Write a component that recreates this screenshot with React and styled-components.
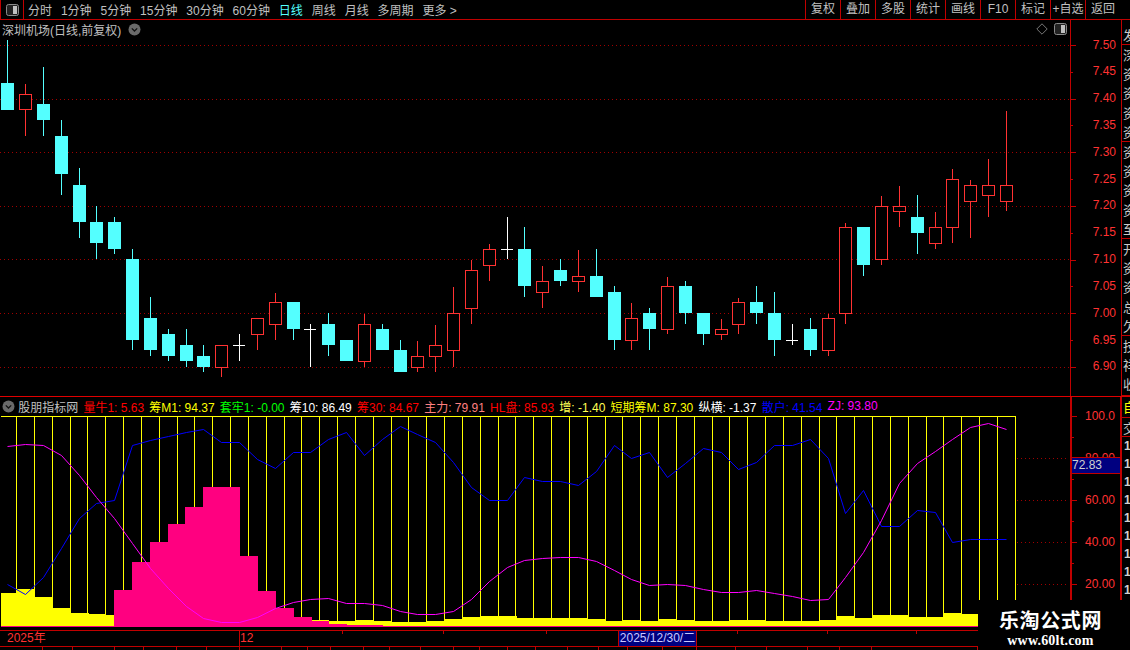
import React from 'react';
import styled, { createGlobalStyle } from 'styled-components';

const GlobalStyle = createGlobalStyle`
  html, body { margin: 0; padding: 0; background: #000; }
  * { box-sizing: border-box; }
`;

const RED_LINE = '#c00000';
const UP = '#ff3232';
const DOWN = '#54ffff';

// [x, 上影, 实体上, 实体下, 下影, 类型]
const candles = [
  [7, 40, 83, 110, 110, 'c'], [25, 84, 94, 110, 136, 'r'], [43, 67, 104, 120, 136, 'c'], [61, 120, 136, 174, 195, 'c'],
  [79, 168, 185, 222, 238, 'c'], [96, 206, 222, 243, 259, 'c'], [114, 217, 222, 249, 254, 'c'], [132, 249, 259, 340, 350, 'c'],
  [150, 297, 318, 350, 356, 'c'], [168, 329, 334, 356, 361, 'c'], [186, 329, 345, 361, 367, 'c'], [203, 345, 356, 367, 372, 'c'],
  [221, 345, 345, 368, 377, 'r'], [239, 334, 345, 345, 361, 'w'], [257, 318, 318, 335, 350, 'r'], [275, 293, 302, 325, 340, 'r'],
  [293, 302, 302, 329, 340, 'c'], [310, 324, 329, 329, 367, 'w'], [328, 313, 324, 345, 356, 'c'], [346, 340, 340, 361, 361, 'c'],
  [364, 314, 324, 362, 367, 'r'], [382, 324, 329, 350, 350, 'c'], [400, 340, 350, 372, 372, 'c'], [417, 341, 356, 368, 372, 'r'],
  [435, 325, 345, 357, 372, 'r'], [453, 287, 313, 351, 367, 'r'], [471, 260, 270, 309, 324, 'r'], [489, 244, 249, 266, 281, 'r'],
  [507, 217, 249, 249, 259, 'w'], [524, 227, 249, 286, 297, 'c'], [542, 266, 281, 293, 308, 'r'], [560, 259, 270, 281, 286, 'c'],
  [578, 250, 276, 282, 292, 'r'], [596, 249, 276, 297, 297, 'c'], [614, 286, 292, 340, 350, 'c'], [631, 303, 318, 341, 350, 'r'],
  [649, 308, 313, 329, 350, 'c'], [667, 277, 286, 330, 334, 'r'], [685, 281, 286, 313, 324, 'c'], [703, 313, 313, 334, 345, 'c'],
  [721, 319, 329, 335, 340, 'r'], [738, 298, 302, 325, 334, 'r'], [756, 286, 302, 313, 324, 'c'], [774, 292, 313, 340, 356, 'c'],
  [792, 324, 340, 340, 345, 'w'], [810, 318, 329, 350, 356, 'c'], [828, 314, 318, 351, 356, 'r'], [845, 223, 227, 314, 324, 'r'],
  [863, 227, 227, 265, 276, 'c'], [881, 196, 206, 260, 265, 'r'], [899, 186, 206, 212, 227, 'r'], [917, 195, 217, 233, 254, 'c'],
  [935, 212, 227, 244, 249, 'r'], [952, 169, 179, 228, 243, 'r'], [970, 180, 185, 202, 238, 'r'], [988, 159, 185, 196, 217, 'r'],
  [1006, 111, 185, 202, 211, 'r'],
];

const gridYs = [45, 99, 152, 206, 259, 313, 367];
const priceLabels = ['7.50', '7.45', '7.40', '7.35', '7.30', '7.25', '7.20', '7.15', '7.10', '7.05', '7.00', '6.95', '6.90'];
const indexLabels = ['100.0', '', '80.00', '', '60.00', '', '40.00', '', '20.00'];

const xs = candles.map((c) => c[0]);
const verticals = [...xs.slice(1).map((x) => x - 9), 1015];

const yellowBars = [
  [1, 593], [16, 589], [35, 597], [53, 608], [71, 613], [89, 614], [106, 615], [123, 626], [312, 620], [329, 621], [347, 621],
  [355, 620], [373, 621], [391, 622], [409, 622], [426, 621], [444, 619], [462, 617], [480, 616], [498, 616], [517, 618],
  [535, 618], [553, 618], [569, 618], [587, 619], [605, 621], [623, 620], [641, 621], [659, 619], [677, 620], [695, 621],
  [713, 621], [730, 620], [748, 620], [766, 621], [784, 621], [802, 621], [820, 620], [837, 616], [855, 618], [873, 615],
  [891, 615], [909, 617], [927, 617], [944, 613], [962, 614], [978, 626],
];
const pinkBars = [
  [114, 590], [132, 562], [150, 542], [168, 524], [185, 507], [203, 487], [240, 556], [258, 591], [276, 608], [294, 617],
  [312, 621], [329, 624], [347, 625], [383, 626],
];

const blueLine = [584, 594, 577, 548, 518, 503, 500, 445, 440, 436, 432, 429, 442, 442, 459, 468, 452, 452, 439, 432, 455, 439, 426, 434, 442, 462, 487, 500, 500, 477, 481, 481, 485, 471, 445, 458, 452, 477, 463, 448, 452, 469, 462, 445, 445, 439, 458, 513, 490, 526, 526, 510, 512, 542, 539, 539, 539];
const zjLine = [446, 444, 445, 455, 475, 497, 518, 543, 568, 588, 606, 618, 622, 622, 617, 608, 602, 599, 598, 603, 603, 605, 611, 614, 614, 611, 599, 581, 567, 560, 558, 557, 557, 561, 570, 579, 585, 584, 585, 589, 592, 592, 590, 593, 596, 600, 599, 577, 552, 520, 483, 463, 451, 439, 427, 423, 429];

const toPoints = (ys) => ys.map((y, i) => `${xs[i] + 0.5},${y + 0.5}`).join(' ');

const legend = [
  ['量牛1: 5.63', '#ff0000'], ['筹M1: 94.37', '#ffff00'], ['套牢1: -0.00', '#00ff00'], ['筹10: 86.49', '#ffffff'],
  ['筹30: 84.67', '#ff0000'], ['主力: 79.91', '#ff8080'], ['HL盘: 85.93', '#ff0000'], ['增: -1.40', '#ffff54'],
  ['短期筹M: 87.30', '#ffff00'], ['纵横: -1.37', '#ffffff'], ['散户: 41.54', '#0000ff'], ['ZJ: 93.80', '#ff00ff'],
];

const leftTabs = ['分时', '1分钟', '5分钟', '15分钟', '30分钟', '60分钟', '日线', '周线', '月线', '多周期', '更多 >'];
const rightButtons = ['复权', '叠加', '多股', '统计', '画线', 'F10', '标记', '+自选', '返回'];

const upperSide = [
  { h: 20, text: '发' },
  { h: 97, text: '深资资资资' },
  { h: 97, text: '资资资资至' },
  { h: 97, text: '开资资总欠' },
  { h: 60, text: '技祥收' },
];

const timeSlots = [
  [239, '2025年', false], [103, '12', true], [101, '', false], [103, '', false], [191, '', false], [90, '', false], [89, '', false], [62, '', false],
];
const tabWidths = [43, 30, 42, 29, 33, 30, 33, 42, 26, 23, 33, 26, 31, 33, 26, 28, 28, 32, 31, 29, 35, 34, 39, 31, 41, 32, 32, 106];

const Page = styled.div`
  position: relative;
  width: 1130px;
  height: 650px;
  overflow: hidden;
  background: #000;
  font-family: "Liberation Sans", "Noto Sans CJK SC", sans-serif;
  font-size: 12px;
  color: #c0c0c0;
`;

const Toolbar = styled.div`
  display: flex;
  align-items: stretch;
  justify-content: space-between;
  height: 20px;
  border-bottom: 1px solid ${RED_LINE};
`;

const TabGroup = styled.div`
  display: flex;
  align-items: center;
`;

const LayoutButton = styled.div`
  display: flex;
  align-items: center;
  justify-content: center;
  width: 24px;
  height: 19px;
  margin-right: 4px;
  border-left: 1px solid ${RED_LINE};
  border-right: 1px solid ${RED_LINE};
`;

const Tab = styled.span`
  margin-right: 8.9px;
  white-space: nowrap;
  color: ${(p) => (p.$active ? DOWN : '#c0c0c0')};
`;

const ButtonGroup = styled.div`
  display: flex;
  width: 325px;
`;

const ToolButton = styled.div`
  flex: 0 0 ${(p) => (p.$last ? '45px' : '35px')};
  padding-right: ${(p) => (p.$last ? '10px' : '0')};
  border-left: 1px solid ${RED_LINE};
  text-align: center;
  line-height: 19px;
  white-space: nowrap;
`;

const Pane = styled.div`
  display: flex;
  height: ${(p) => p.$h}px;
  border-bottom: ${(p) => (p.$divider ? '1px solid #e00000' : 'none')};
`;

const PlotColumn = styled.div`
  display: flex;
  flex-direction: column;
  width: 1070px;
`;

const PaneHead = styled.div`
  display: flex;
  align-items: center;
  justify-content: space-between;
  flex: 0 0 18px;
  padding: 0 1px 0 2px;
`;

const StockTitle = styled.div`
  display: flex;
  align-items: center;
  gap: 7px;
  white-space: nowrap;
`;

const HeadIcons = styled.div`
  display: flex;
  align-items: center;
  gap: 6px;
  padding-right: 2px;
`;

const Legend = styled.div`
  display: flex;
  align-items: center;
  gap: 5.2px;
  flex: 0 0 19px;
  padding: 0 0 1px 2px;
  white-space: nowrap;
`;

const LegendTitle = styled.span`
  margin-left: -2px;
`;

const LegendItem = styled.span`
  color: ${(p) => p.$color};
`;

const PlotSvg = styled.svg`
  display: block;
  flex: 1;
  width: 1070px;
  shape-rendering: crispEdges;
`;

const AxisColumn = styled.div`
  width: 52px;
  padding-top: ${(p) => p.$pad}px;
  border-left: ${(p) => p.$line}px solid ${RED_LINE};
  border-right: ${(p) => p.$line}px solid ${RED_LINE};
`;

const AxisRow = styled.div`
  position: relative;
  height: ${(p) => p.$h}px;
  line-height: ${(p) => p.$h}px;
  padding-right: 5px;
  text-align: right;
  color: ${UP};

  &::before {
    content: '';
    position: absolute;
    left: 0;
    top: 50%;
    width: ${(p) => (p.$major ? 5 : 2)}px;
    height: 1px;
    background: ${RED_LINE};
  }
`;

const PriceTag = styled.div`
  position: absolute;
  left: 1072px;
  top: 457px;
  width: 48px;
  height: 17px;
  border-top: 1px solid ${RED_LINE};
  border-bottom: 1px solid ${RED_LINE};
  background: #000080;
  color: #d0d0d0;
  line-height: 15px;
`;

const SideColumn = styled.div`
  flex: 1;
  overflow: hidden;
  padding-top: ${(p) => p.$pad || 0}px;
`;

const SideSection = styled.div`
  height: ${(p) => p.$h}px;
  padding: 1px 0 0 1px;
  border-bottom: 1px solid ${RED_LINE};
  color: ${(p) => p.$color || '#c8c8c8'};
  overflow: hidden;
`;

const SideText = styled.div`
  width: 13px;
  font-size: 13px;
  line-height: 19.2px;
  word-break: break-all;
`;

const SideNumber = styled.div`
  height: 18px;
  padding-left: 2px;
  line-height: 18px;
  font-weight: bold;
  color: #d0d0d0;
`;

const TimeBar = styled.div`
  display: flex;
  width: 978px;
  height: 17px;
  margin-top: 1px;
  border-top: 1px solid ${RED_LINE};
  border-bottom: 1px solid ${RED_LINE};
`;

const TimeSlot = styled.div`
  position: relative;
  flex: 0 0 ${(p) => p.$w}px;
  padding-left: ${(p) => (p.$full ? 1 : 7)}px;
  color: ${UP};
  line-height: 15px;

  &::before {
    content: '';
    position: absolute;
    left: 0;
    top: 0;
    width: 1px;
    height: ${(p) => (p.$full ? 15 : 3)}px;
    background: ${(p) => (p.$first ? 'transparent' : RED_LINE)};
  }
`;

const DateTag = styled.div`
  position: absolute;
  left: 618px;
  top: 631px;
  width: 79px;
  height: 15px;
  border-left: 1px solid ${RED_LINE};
  border-right: 1px solid ${RED_LINE};
  background: #000080;
  color: #c8c8ff;
  line-height: 15px;
  text-align: center;
  white-space: nowrap;
`;

const BottomTabs = styled.div`
  display: flex;
  width: 978px;
  height: 4px;
  overflow: hidden;
`;

const BottomTab = styled.div`
  flex: 0 0 ${(p) => p.$w}px;
  border-right: 1px solid ${RED_LINE};
`;

const Watermark = styled.div`
  position: absolute;
  right: 0;
  bottom: 0;
  display: flex;
  flex-direction: column;
  align-items: center;
  width: 152px;
  height: 50px;
  padding: 7px 7px 0 0;
  background: #000;
  color: #fff;
`;

const WatermarkTitle = styled.div`
  font-family: "Noto Sans CJK SC", sans-serif;
  font-size: 20px;
  font-weight: 700;
  letter-spacing: 0.6px;
  line-height: 26px;
`;

const WatermarkUrl = styled.div`
  font-family: "Liberation Serif", serif;
  font-size: 14px;
  font-weight: 700;
  letter-spacing: 0.2px;
  line-height: 15px;
`;

const PanelIcon = () => (
  <svg width="13" height="12" viewBox="0 0 13 12">
    <rect x="0.5" y="0.5" width="12" height="11" rx="2" fill="#222" stroke="#8a8a8a" />
    <rect x="7" y="2" width="4" height="8" fill="#c0c0c0" />
  </svg>
);

const DiamondIcon = () => (
  <svg width="12" height="12" viewBox="0 0 12 12">
    <path d="M6 .8 11.2 6 6 11.2.8 6Z" fill="none" stroke="#777" />
  </svg>
);

const ChevronDot = () => (
  <svg width="13" height="13" viewBox="0 0 13 13">
    <circle cx="6.5" cy="6.5" r="6" fill="#6a6a6a" />
    <path d="M3.8 5.4 6.5 8l2.7-2.6" fill="none" stroke="#111" strokeWidth="1.3" />
  </svg>
);

const Candle = ({ x, high, top, bottom, low, kind }) => {
  if (kind === 'w') {
    return (
      <g fill="#fff">
        <rect x={x} y={high} width="1" height={low - high} />
        <rect x={x - 6} y={top} width="12" height="1" />
      </g>
    );
  }
  const color = kind === 'r' ? UP : DOWN;
  return (
    <g>
      <rect x={x} y={high} width="1" height={low - high} fill={color} />
      {kind === 'r' ? (
        <rect x={x - 5.5} y={top + 0.5} width="12" height={bottom - top - 1} fill="#000" stroke={color} />
      ) : (
        <rect x={x - 6} y={top} width="13" height={bottom - top} fill={color} />
      )}
    </g>
  );
};

const PriceChart = () => (
  <PlotSvg viewBox="0 38 1070 358" height="358">
    {gridYs.map((y) => (
      <line key={y} x1="0" x2="1070" y1={y + 0.5} y2={y + 0.5} stroke="#a00000" strokeDasharray="1 3" />
    ))}
    {candles.map(([x, high, top, bottom, low, kind]) => (
      <Candle key={x} x={x} high={high} top={top} bottom={bottom} low={low} kind={kind} />
    ))}
  </PlotSvg>
);

const IndexChart = () => (
  <PlotSvg viewBox="0 416 1070 213" height="213">
    {[458, 500, 542, 584].map((y) => (
      <line key={y} x1="1017" x2="1067" y1={y + 0.5} y2={y + 0.5} stroke="#a00000" strokeDasharray="1 3" />
    ))}
    <rect x="1" y="416" width="1015" height="1" fill="#ffff00" />
    {verticals.map((x) => (
      <rect key={x} x={x} y="416" width="1" height="211" fill="#ffff00" />
    ))}
    {yellowBars.slice(0, -1).map(([x, top], i) => (
      <rect key={x} x={x} y={top} width={yellowBars[i + 1][0] - x} height={626 - top} fill="#ffff00" />
    ))}
    {pinkBars.slice(0, -1).map(([x, top], i) => (
      <rect key={x} x={x} y={top} width={pinkBars[i + 1][0] - x} height={626 - top} fill="#ff0080" />
    ))}
    <rect x="1" y="626" width="977" height="1" fill="#ff0080" />
    <g shapeRendering="auto" fill="none" strokeWidth="1">
      <polyline points={toPoints(blueLine)} stroke="#0000ff" />
      <polyline points={toPoints(zjLine)} stroke="#ff00ff" />
    </g>
  </PlotSvg>
);

export default function App() {
  return (
    <Page>
      <GlobalStyle />
      <Toolbar>
        <TabGroup>
          <LayoutButton>
            <PanelIcon />
          </LayoutButton>
          {leftTabs.map((t) => (
            <Tab key={t} $active={t === '日线'}>{t}</Tab>
          ))}
        </TabGroup>
        <ButtonGroup>
          {rightButtons.map((b) => (
            <ToolButton key={b} $last={b === '返回'}>{b}</ToolButton>
          ))}
        </ButtonGroup>
      </Toolbar>

      <Pane $h={377} $divider>
        <PlotColumn>
          <PaneHead>
            <StockTitle>
              深圳机场(日线,前复权)
              <ChevronDot />
            </StockTitle>
            <HeadIcons>
              <DiamondIcon />
              <PanelIcon />
            </HeadIcons>
          </PaneHead>
          <PriceChart />
        </PlotColumn>
        <AxisColumn $pad={11.5} $line={1}>
          {priceLabels.map((label, i) => (
            <AxisRow key={label} $h={26.83} $major={i % 2 === 0}>{label}</AxisRow>
          ))}
        </AxisColumn>
        <SideColumn $pad={5}>
          {upperSide.map((s, i) => (
            <SideSection key={i} $h={s.h}>
              <SideText>{s.text}</SideText>
            </SideSection>
          ))}
        </SideColumn>
      </Pane>

      <Pane $h={232}>
        <PlotColumn>
          <Legend>
            <ChevronDot />
            <LegendTitle>股朋指标网</LegendTitle>
            {legend.map(([text, color]) => (
              <LegendItem key={text} $color={color}>{text}</LegendItem>
            ))}
          </Legend>
          <IndexChart />
        </PlotColumn>
        <AxisColumn $pad={8.5} $line={2}>
          {indexLabels.map((label, i) => (
            <AxisRow key={i} $h={21} $major={i % 2 === 0}>{label}</AxisRow>
          ))}
        </AxisColumn>
        <SideColumn>
          <SideSection $h={21} $color="#ffff00">
            <SideText>自</SideText>
          </SideSection>
          <SideSection $h={19}>
            <SideText>交</SideText>
          </SideSection>
          {[0, 1, 2, 3, 4, 5, 6, 7, 8].map((n) => (
            <SideNumber key={n}>1</SideNumber>
          ))}
        </SideColumn>
      </Pane>
      <PriceTag>72.83</PriceTag>

      <TimeBar>
        {timeSlots.map(([w, label, full], i) => (
          <TimeSlot key={i} $w={w} $full={full} $first={i === 0}>{label}</TimeSlot>
        ))}
      </TimeBar>
      <DateTag>2025/12/30/二</DateTag>
      <BottomTabs>
        {tabWidths.map((w, i) => (
          <BottomTab key={i} $w={w} />
        ))}
      </BottomTabs>

      <Watermark>
        <WatermarkTitle>乐淘公式网</WatermarkTitle>
        <WatermarkUrl>www.60lt.com</WatermarkUrl>
      </Watermark>
    </Page>
  );
}
